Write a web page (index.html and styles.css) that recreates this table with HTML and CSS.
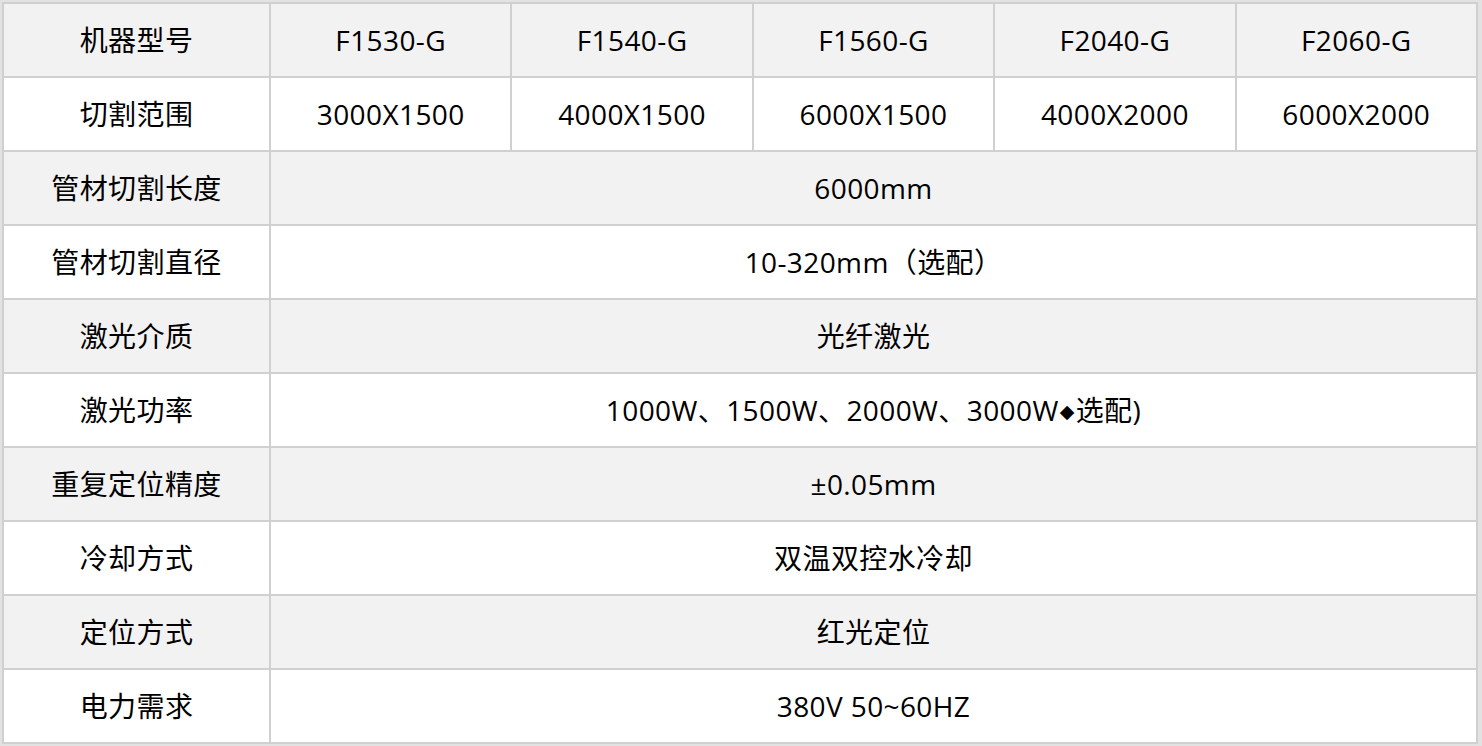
FILE: index.html
```html
<!DOCTYPE html>
<html lang="zh-CN">
<head>
<meta charset="utf-8">
<title>参数</title>
<link rel="stylesheet" href="styles.css">
</head>
<body>
<div class="frame">
<table class="spec">
<colgroup><col class="c-label"><col><col><col><col><col></colgroup>
<tbody>
<tr class="alt"><td>机器型号</td><td>F1530-G</td><td>F1540-G</td><td>F1560-G</td><td>F2040-G</td><td>F2060-G</td></tr>
<tr><td>切割范围</td><td>3000X1500</td><td>4000X1500</td><td>6000X1500</td><td>4000X2000</td><td>6000X2000</td></tr>
<tr class="alt"><td>管材切割长度</td><td colspan="5">6000mm</td></tr>
<tr><td>管材切割直径</td><td colspan="5">10-320mm（选配）</td></tr>
<tr class="alt"><td>激光介质</td><td colspan="5">光纤激光</td></tr>
<tr><td>激光功率</td><td colspan="5">1000W、1500W、2000W、3000W<span class="dia">◆</span>选配)</td></tr>
<tr class="alt"><td>重复定位精度</td><td colspan="5">±0.05mm</td></tr>
<tr><td>冷却方式</td><td colspan="5">双温双控水冷却</td></tr>
<tr class="alt"><td>定位方式</td><td colspan="5">红光定位</td></tr>
<tr><td>电力需求</td><td colspan="5">380V 50~60HZ</td></tr>
</tbody>
</table>
</div>
</body>
</html>
```
FILE: styles.css
```css
html, body {
  margin: 0;
  padding: 0;
  background: #e2e2e2;
}
.frame {
  padding: 2px 4px 2px 2px;
  width: 1476px;
}
.spec {
  width: 1476px;
  table-layout: fixed;
  border-collapse: collapse;
  font-family: "Open Sans", "Noto Sans CJK SC", sans-serif;
  font-size: 28px;
  letter-spacing: 0.4px;
  color: #000;
}
.c-label {
  width: 267px;
}
.spec td {
  border: 2px solid #d0d0d0;
  height: 72px;
  padding: 0;
  text-align: center;
  vertical-align: middle;
  background: #fff;
  line-height: 1;
}
.spec tr.alt td {
  background: #f2f2f2;
}
.dia {
  font-size: 19px;
  font-family: "DejaVu Sans", sans-serif;
  vertical-align: 3px;
  padding: 0 1px;
}
```
